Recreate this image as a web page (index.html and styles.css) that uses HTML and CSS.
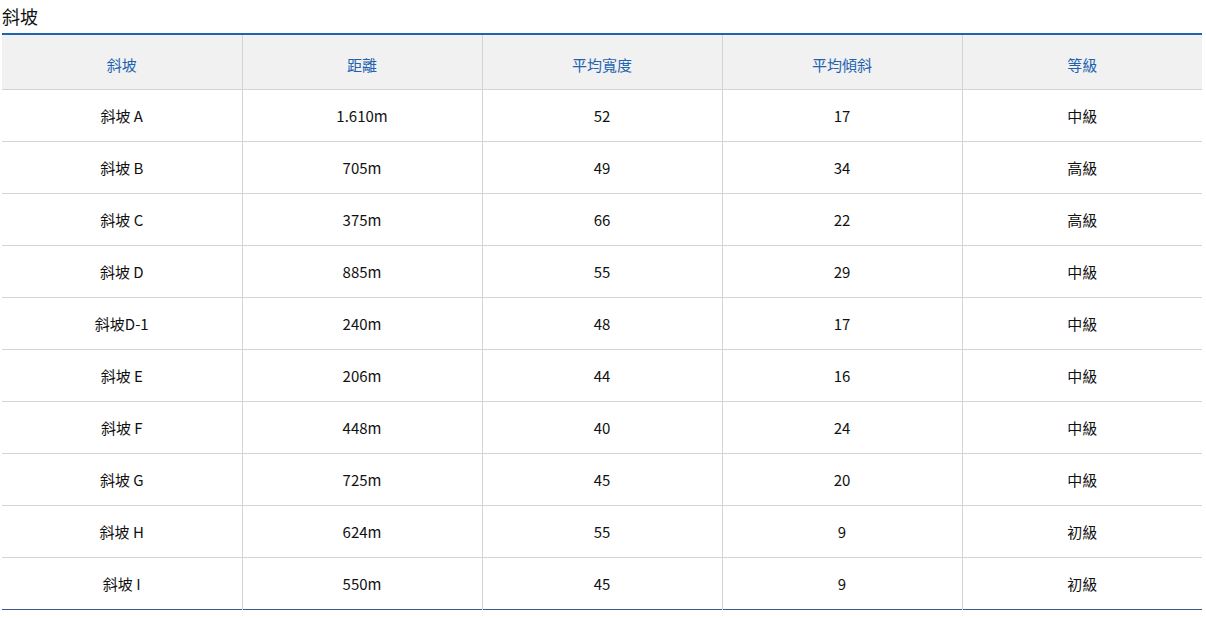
FILE: index.html
```html
<!DOCTYPE html>
<html lang="zh-Hant">
<head>
<meta charset="utf-8">
<link rel="stylesheet" href="styles.css">
</head>
<body>
<div class="wrap">
  <h2 class="title">斜坡</h2>
  <table class="slopes">
    <thead>
      <tr><th>斜坡</th><th>距離</th><th>平均寬度</th><th>平均傾斜</th><th>等級</th></tr>
    </thead>
    <tbody>
      <tr><td>斜坡 A</td><td>1.610m</td><td>52</td><td>17</td><td>中級</td></tr>
      <tr><td>斜坡 B</td><td>705m</td><td>49</td><td>34</td><td>高級</td></tr>
      <tr><td>斜坡 C</td><td>375m</td><td>66</td><td>22</td><td>高級</td></tr>
      <tr><td>斜坡 D</td><td>885m</td><td>55</td><td>29</td><td>中級</td></tr>
      <tr><td>斜坡D-1</td><td>240m</td><td>48</td><td>17</td><td>中級</td></tr>
      <tr><td>斜坡 E</td><td>206m</td><td>44</td><td>16</td><td>中級</td></tr>
      <tr><td>斜坡 F</td><td>448m</td><td>40</td><td>24</td><td>中級</td></tr>
      <tr><td>斜坡 G</td><td>725m</td><td>45</td><td>20</td><td>中級</td></tr>
      <tr><td>斜坡 H</td><td>624m</td><td>55</td><td>9</td><td>初級</td></tr>
      <tr><td>斜坡 I</td><td>550m</td><td>45</td><td>9</td><td>初級</td></tr>
    </tbody>
  </table>
</div>
</body>
</html>
```
FILE: styles.css
```css
html, body {
  margin: 0;
  padding: 0;
  background: #fff;
}
body {
  font-family: "Noto Sans CJK TC", "Noto Sans", sans-serif;
  color: #111;
}
.wrap {
  padding: 0 4px 0 2px;
}
.title {
  margin: 0;
  padding-top: 3px;
  font-size: 18px;
  line-height: 26px;
  font-weight: 400;
  height: 30px;
}
.slopes {
  width: 1200px;
  border-collapse: collapse;
  table-layout: fixed;
  border-top: 2px solid #1f63b0;
  border-bottom: 1px solid #3b5b86;
}
.slopes th, .slopes td {
  text-align: center;
  vertical-align: middle;
  font-size: 15px;
  padding: 0;
  border-left: 1px solid #d4d4d4;
  border-bottom: 1px solid #d4d4d4;
}
.slopes th:first-child, .slopes td:first-child {
  border-left: none;
}
.slopes th {
  background: #f1f1f1;
  color: #1f63b0;
  font-weight: 400;
  height: 50px;
  padding-top: 4px;
}
.slopes td {
  height: 51px;
}
.slopes tbody tr:last-child td {
  border-bottom: none;
}
```
